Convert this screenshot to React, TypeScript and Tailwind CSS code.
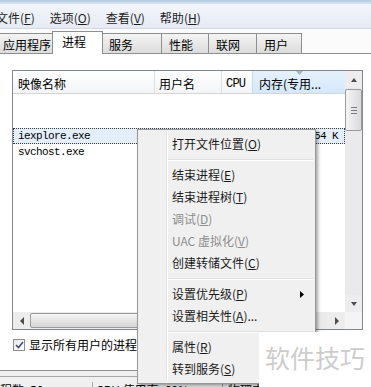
import React from "react";

type MenuEntry =
  | { kind: "sep" }
  | { kind: "item"; text: string; key: string; tail?: string; disabled?: boolean; sub?: boolean };

const menuEntries: MenuEntry[] = [
  { kind: "item", text: "打开文件位置", key: "O" },
  { kind: "sep" },
  { kind: "item", text: "结束进程", key: "E" },
  { kind: "item", text: "结束进程树", key: "T" },
  { kind: "item", text: "调试", key: "D", disabled: true },
  { kind: "item", text: "UAC 虚拟化", key: "V", disabled: true },
  { kind: "item", text: "创建转储文件", key: "C" },
  { kind: "sep" },
  { kind: "item", text: "设置优先级", key: "P", sub: true },
  { kind: "item", text: "设置相关性", key: "A", tail: "..." },
  { kind: "sep" },
  { kind: "item", text: "属性", key: "R" },
  { kind: "item", text: "转到服务", key: "S" },
];

const topMenus = [
  { text: "文件", key: "F" },
  { text: "选项", key: "O" },
  { text: "查看", key: "V" },
  { text: "帮助", key: "H" },
];

const tabs = [
  { label: "应用程序", w: "w-[56px]", pl: "pl-[5px]" },
  { label: "进程", w: "w-[51px]", pl: "pl-[9px]", active: true },
  { label: "服务", w: "w-[59px]", pl: "pl-[6px]" },
  { label: "性能", w: "w-[47px]", pl: "pl-[7px]" },
  { label: "联网", w: "w-[48px]", pl: "pl-[7px]" },
  { label: "用户", w: "w-[46px]", pl: "pl-[7px]" },
];

function Arrow({ dir }: { dir: "up" | "down" | "left" | "right" }) {
  const pts = {
    up: "1,5 4,1 7,5",
    down: "1,1 4,5 7,1",
    left: "5,0 1,4 5,8",
    right: "1,0 5,4 1,8",
  }[dir];
  const vert = dir === "up" || dir === "down";
  return (
    <svg width={vert ? 8 : 6} height={vert ? 6 : 8} viewBox={vert ? "0 0 8 6" : "0 0 6 8"}>
      <polygon points={pts} fill="#4d4d4d" />
    </svg>
  );
}

function ScrollButton({ dir }: { dir: "up" | "down" | "left" | "right" }) {
  return (
    <div className="flex h-[17px] w-[17px] shrink-0 items-center justify-center bg-[#ededed]">
      <Arrow dir={dir} />
    </div>
  );
}

function MenuBar() {
  return (
    <div className="flex h-[25px] items-center gap-[15px] border-b border-[#d3dae5] bg-gradient-to-b from-[#f3f6fb] to-[#e5ebf3] pt-[3px] -ml-[4px] leading-[16px]">
      {topMenus.map((m) => (
        <span key={m.key} className="text-[#1e1e1e]">
          {m.text}(<span className="underline">{m.key}</span>)
        </span>
      ))}
    </div>
  );
}

function TabStrip() {
  return (
    <div className="flex h-[24px] items-end bg-[#fbfbfb] -ml-[3px]">
      {tabs.map((t) =>
        t.active ? (
          <div
            key={t.label}
            className={`${t.w} relative z-10 -mb-[1px] h-[23px] border border-b-0 border-[#8e8f8f] bg-white ${t.pl} pt-[2px] leading-[16px] -mx-[1px]`}
          >
            {t.label}
          </div>
        ) : (
          <div
            key={t.label}
            className={`${t.w} h-[20px] border border-b-0 border-r-0 border-[#8e8f8f] bg-gradient-to-b from-[#f4f4f4] to-[#dcdcdc] ${t.pl} pt-[3px] leading-[16px] last:border-r`}
          >
            {t.label}
          </div>
        )
      )}
    </div>
  );
}

function ListBox() {
  return (
    <div className="flex h-[260px] w-[351px] flex-col border border-[#828790] bg-white">
      <div className="flex h-[241px]">
        <div className="flex flex-1 flex-col">
          <div className="flex h-[23px] border-b border-[#d5d5d5] bg-gradient-to-b from-white to-[#f3f4f6] leading-[16px]">
            <div className="w-[142px] border-r border-[#dedfe1] pl-[5px] pt-[5px]">映像名称</div>
            <div className="w-[67px] border-r border-[#dedfe1] pl-[4px] pt-[5px]">用户名</div>
            <div className="w-[30px] pl-[4px] pt-[5px] font-['Liberation_Mono',monospace] text-[12px] tracking-[-0.8px]">CPU</div>
            <div className="relative flex-1 border-l border-[#c3dcf3] bg-gradient-to-b from-[#e6f2fc] to-[#d4e8fa] pl-[6px] pt-[5px]">
              内存(专用...
              <svg className="absolute left-[43px] top-[0px]" width="7" height="4" viewBox="0 0 7 4">
                <polygon points="0,0 7,0 3.5,4" fill="#a8b4c4" />
              </svg>
            </div>
          </div>
          <div className="h-[34px]" />
          <div className="flex h-[16px] items-center justify-between border border-dotted border-[#3a3a3a] bg-[#e4eef9] pl-[4px] pr-[6px] font-['Liberation_Mono',monospace] text-[11px] tracking-[-0.6px]">
            <span>iexplore.exe</span>
            <span>87,354 K</span>
          </div>
          <div className="flex h-[16px] items-center pl-[5px] font-['Liberation_Mono',monospace] text-[11px] tracking-[-0.6px]">
            svchost.exe
          </div>
        </div>
        <div className="flex w-[17px] flex-col bg-[#eaeaea]">
          <ScrollButton dir="up" />
          <div className="flex-1 pt-[1px]">
            <div className="flex h-[42px] flex-col items-center justify-center gap-[2px] rounded-[2px] border border-[#9a9a9a] bg-gradient-to-r from-[#f5f5f5] to-[#dadada]">
              <div className="h-px w-[6px] bg-[#7b7b7b]" />
              <div className="h-px w-[6px] bg-[#7b7b7b]" />
              <div className="h-px w-[6px] bg-[#7b7b7b]" />
            </div>
          </div>
          <ScrollButton dir="down" />
        </div>
      </div>
      <div className="flex h-[17px]">
        <ScrollButton dir="left" />
        <div className="flex-1 bg-[#eaeaea] pr-[30px] pt-[1px]">
          <div className="h-[15px] rounded-[2px] border border-[#9a9a9a] bg-gradient-to-b from-[#f5f5f5] to-[#d6d6d6]" />
        </div>
        <ScrollButton dir="right" />
        <div className="w-[17px] bg-[#f4f4f4]" />
      </div>
    </div>
  );
}

function Panel() {
  return (
    <div className="h-[318px] border-y border-[#8e8f8f] bg-white pl-[12px] pt-[16px]">
      <ListBox />
      <div className="mt-[8px] flex items-center gap-[4px] pl-[1px] leading-[14px]">
        <div className="flex h-[12px] w-[12px] items-center justify-center border border-[#8f8f8f] bg-gradient-to-br from-[#e8e8e8] to-white">
          <svg width="9" height="8" viewBox="0 0 9 8">
            <polyline points="1,4 3.5,6.5 8,1" fill="none" stroke="#3b4f86" strokeWidth="1.6" />
          </svg>
        </div>
        <span>显示所有用户的进程</span>
      </div>
    </div>
  );
}

function StatusBar() {
  return (
    <div className="mt-[5px] flex h-[20px] border-t border-[#a7a7a7] bg-[#f0f0f0] pt-[5px] leading-[16px] -ml-[13px]">
      <div className="w-[106px] border-r border-[#a7a7a7] pl-[1px]">进程数: 50</div>
      <div className="w-[130px] border-r border-[#a7a7a7] pl-[3px]">CPU 使用率: 60%</div>
      <div className="pl-[5px]">物理内存: 72%</div>
    </div>
  );
}

function ContextMenu() {
  return (
    <div className="absolute left-[137px] top-[129px] w-[179px] border border-[#979797] bg-[#f0f0f0] py-[3px] shadow-[2px_2px_3px_rgba(0,0,0,0.35)]">
      <div className="absolute bottom-[2px] left-[28px] top-[2px] w-[2px] border-l border-[#e2e3e3] bg-transparent">
        <div className="ml-0 h-full w-px bg-white" />
      </div>
      {menuEntries.map((e, i) =>
        e.kind === "sep" ? (
          <div key={i} className="ml-[30px] mr-[2px] flex h-[9px] flex-col justify-center">
            <div className="h-px bg-[#e0e0e0]" />
            <div className="h-px bg-white" />
          </div>
        ) : (
          <div
            key={i}
            className={`relative flex h-[22px] items-center justify-between pl-[34px] pr-[11px] leading-[16px] ${
              e.disabled ? "text-[#8d8d8d]" : "text-[#1b1b1b]"
            }`}
          >
            <span>
              {e.text}(<span className="underline">{e.key}</span>){e.tail}
            </span>
            {e.sub && (
              <svg width="4" height="7" viewBox="0 0 4 7">
                <polygon points="0,0 4,3.5 0,7" fill="#000" />
              </svg>
            )}
          </div>
        )
      )}
    </div>
  );
}

function Watermark() {
  return (
    <div className="absolute bottom-0 left-[259px] right-0 top-[332px] bg-white pl-[6px] pt-[10px] text-[25px] leading-[30px] text-[#cdcdcd]">
      软件技巧
    </div>
  );
}

export default function App() {
  return (
    <div className="relative h-[387px] w-[371px] overflow-hidden bg-[#f0f0f0] font-['Noto_Sans_CJK_SC',sans-serif] text-[12px] text-black">
      <div className="h-[4px] bg-gradient-to-b from-[#b3c8e2] to-[#dbe5f1]" />
      <MenuBar />
      <TabStrip />
      <Panel />
      <StatusBar />
      <ContextMenu />
      <Watermark />
    </div>
  );
}
